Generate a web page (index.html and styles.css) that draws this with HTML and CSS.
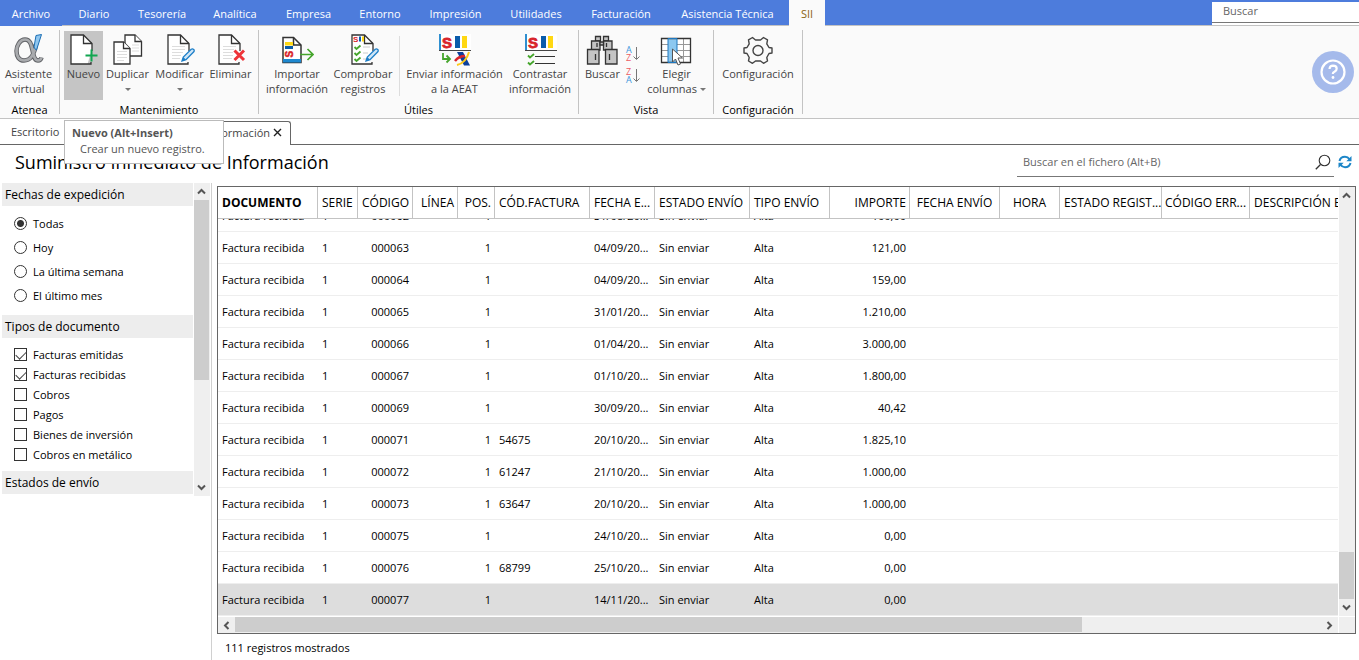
FILE: index.html
```html
<!DOCTYPE html>
<html lang="es">
<head>
<meta charset="utf-8">
<title>Suministro Inmediato de Información</title>
<link rel="stylesheet" href="styles.css">
</head>
<body>
<svg class="defs" aria-hidden="true">
  <symbol id="pencil" viewBox="0 0 14 14"><path d="M1 13l1.300-4L10.200 1.200Q11.500.3 12.700 1.400 13.700 2.600 12.800 3.800L5 11.700z" fill="#cfe6f7" stroke="#1e7fc8" stroke-width="1.300"/><path d="M1 13l1.300-4L5 11.700z" fill="#1e7fc8"/></symbol>
  <symbol id="page" viewBox="0 0 23 31"><path d="M22 15V9.500L13.500 1H1v29h16.500" fill="#fff" stroke="none"/><path d="M22 17V9.500L13.500 1H1v29h20v-2" fill="none" stroke="#333" stroke-width="1.300"/><path d="M13.500 1v8.500H22" fill="none" stroke="#333" stroke-width="1.300"/></symbol>
  <symbol id="sii" viewBox="0 0 33 18"><path d="M2 0h31v16H2z" fill="#fff"/><path d="M1 0h2v17H1z" fill="#2f8fd0"/><path d="M1 16h32v1H1z" fill="#444"/><text x="4" y="14" font-size="15" font-weight="bold" fill="#d8232a" stroke="#d8232a" stroke-width=".8" font-family="Liberation Sans">S</text><path d="M17 2h5v12h-5z" fill="#0a5cab"/><path d="M24 2h5v12h-5z" fill="#ffd813"/></symbol>
  <symbol id="up" viewBox="0 0 9 9"><path d="M1 6.500l3.500-3.500L8 6.500" fill="none" stroke="#555" stroke-width="2"/></symbol>
</svg>

<header class="menubar">
  <nav class="menu">
    <a href="#" class="file">Archivo</a><a href="#">Diario</a><a href="#">Tesorería</a><a href="#">Analítica</a><a href="#">Empresa</a><a href="#">Entorno</a><a href="#">Impresión</a><a href="#">Utilidades</a><a href="#">Facturación</a><a href="#">Asistencia Técnica</a><a href="#" class="active" aria-current="page">SII</a>
  </nav>
  <input class="menu-search" type="text" placeholder="Buscar" aria-label="Buscar">
</header>

<section class="ribbon" aria-label="Cinta de opciones">
  <div class="group">
    <div class="tools atenea">
      <button class="tool">
        <svg width="33" height="32" viewBox="0 0 33 32"><path d="M24 10C22 23 17 26.500 12 26.500 7 26.500 4.500 22.500 4.500 17S8 5.500 13 5.500c6 0 6.500 7 8 13 1 5 2 8 5 8 2 0 3-1 3.500-3" fill="none" stroke="#606266" stroke-width="4.500"/><path d="M24 10C22 23 17 26.500 12 26.500 7 26.500 4.500 22.500 4.500 17S8 5.500 13 5.500c6 0 6.500 7 8 13 1 5 2 8 5 8 2 0 3-1 3.500-3" fill="none" stroke="#a9abae" stroke-width="2.700"/><path d="M24 1.500L29.500.5 24.500 16q-2-1-2.500-3z" fill="#8fc6ef" stroke="#1c6fb5"/></svg>
        <span>Asistente<br>virtual</span>
      </button>
    </div>
    <h2>Atenea</h2>
  </div>
  <div class="group">
    <div class="tools mantenimiento">
      <button class="tool hover" aria-describedby="tip">
        <svg width="33" height="32" viewBox="0 0 33 32"><use href="#page" x="3" y="0" width="23" height="31"/><path d="M24.500 15.500v12M18.500 21.500h12" stroke="#11a650" stroke-width="2"/></svg>
        <span>Nuevo</span>
      </button>
      <button class="tool">
        <svg width="33" height="32" viewBox="0 0 33 32"><g fill="#fff" stroke="#333" stroke-width="1.300"><path d="M14 1h10l6.500 6.500V22H14z"/><path d="M24 1v6.500h6.500"/></g><path d="M21 11h7M21 14h7M21 17h7" stroke="#ddd"/><g fill="#fff" stroke="#333" stroke-width="1.300"><path d="M3 8h9.500l6.500 6.500V30H3z"/><path d="M12.500 8v6.500H19"/></g><path d="M6 17.500h10M6 20.500h10M6 23.500h10M6 26.500h7" stroke="#ddd"/></svg>
        <span>Duplicar</span><i class="caret"></i>
      </button>
      <button class="tool">
        <svg width="33" height="32" viewBox="0 0 33 32"><use href="#page" x="4" y="0" width="23" height="31"/><path d="M9 12.500h13M9 15.500h13M9 18.500h11M9 21.500h9M9 24.500h8" stroke="#ddd"/><use href="#pencil" x="18" y="14" width="14" height="14"/></svg>
        <span>Modificar</span><i class="caret"></i>
      </button>
      <button class="tool">
        <svg width="33" height="32" viewBox="0 0 33 32"><use href="#page" x="4" y="0" width="23" height="31"/><path d="M9 12.500h13M9 15.500h11M9 18.500h10M9 21.500h10M9 24.500h9" stroke="#ddd"/><path d="M20.500 16.500l9.500 9.500M30 16.500L20.500 26" stroke="#ee3338" stroke-width="3"/></svg>
        <span>Eliminar</span>
      </button>
    </div>
    <h2>Mantenimiento</h2>
  </div>
  <div class="group">
    <div class="tools utiles">
      <button class="tool">
        <svg width="33" height="32" viewBox="0 0 33 32"><path d="M2 3.500h10.500L20 11v17.500H2z" fill="#fff" stroke="#333" stroke-width="1.500"/><path d="M12.500 3.500V11H20" fill="none" stroke="#333" stroke-width="1.500"/><path d="M2 25h18v3.500H2z" fill="#1e88cf"/><path d="M4 8h8v3.500H4z" fill="#ffd813"/><path d="M4 12h8v3H4z" fill="#0a5cab"/><text transform="translate(11.500 23.500) rotate(-90)" font-size="10" font-weight="bold" font-family="Liberation Sans" fill="#d8232a" stroke="#d8232a" stroke-width=".5">S</text><path d="M19 20.500h12M26.500 15l5.500 5.500-5.500 5.500" fill="none" stroke="#45a52c" stroke-width="1.700"/></svg>
        <span>Importar<br>información</span>
      </button>
      <button class="tool">
        <svg width="33" height="32" viewBox="0 0 33 32"><use href="#page" x="4" y="0" width="23" height="31"/><text x="6" y="8" font-size="8" font-weight="bold" font-family="Liberation Sans" fill="#d8232a">S</text><path d="M12 2.500h2v5h-2z" fill="#0a5cab"/><path d="M15 2.500h2v5h-2z" fill="#ffd813"/><path d="M7.500 13l2 2 4-3.500M7.500 19l2 2 4-3.500M7.500 25l2 2 4-3.500" fill="none" stroke="#45a52c" stroke-width="1.800"/><path d="M16 13h7M16 19h5M16 25h3" stroke="#ccc"/><use href="#pencil" x="18" y="14" width="14" height="14"/></svg>
        <span>Comprobar<br>registros</span>
      </button>
      <i class="divider"></i>
      <button class="tool">
        <svg width="33" height="32" viewBox="0 0 33 32"><use href="#sii" width="33" height="18"/><path d="M5 19v6h7M8.500 21.500l3.500 3.500-3.500 3.500" fill="none" stroke="#45a52c" stroke-width="1.800"/><path d="M19 18h6l7 13.500h-6z" fill="#0b3f9b"/><path d="M17 27q4-5 10-5" fill="none" stroke="#d8232a" stroke-width="2.500"/><path d="M19 31Q28 29 31 18" fill="none" stroke="#ffc91a" stroke-width="2"/></svg>
        <span>Enviar información<br>a la AEAT</span>
      </button>
      <button class="tool">
        <svg width="33" height="32" viewBox="0 0 33 32"><use href="#sii" width="33" height="18"/><path d="M4 21.500l2 2 4-3.500M4 28.500l2 2 4-3.500" fill="none" stroke="#45a52c" stroke-width="1.800"/><path d="M11 22.500h20M11 29.500h20" stroke="#333"/></svg>
        <span>Contrastar<br>información</span>
      </button>
    </div>
    <h2>Útiles</h2>
  </div>
  <div class="group">
    <div class="tools vista">
      <button class="tool">
        <svg width="33" height="32" viewBox="0 0 33 32"><g fill="#c4c4c4" stroke="#333" stroke-width="1.300"><path d="M9.500 2.500h5V7h-5zM17.500 2.500h5V7h-5z"/><path d="M5.500 7H14v9H5.500zM17.500 7H26v9h-8.500z"/><path d="M14 8h3.500v3H14z"/><path d="M1.500 15.500H13V30H1.500zM19.500 15.500H31V30H19.500z"/></g><path d="M11 9v4M20.500 9v4M9.500 20v6M23.500 20v6" stroke="#333" stroke-width="1.300"/></svg>
        <span>Buscar</span>
      </button>
      <div class="sorts">
        <button aria-label="Orden ascendente"><svg width="16" height="22" viewBox="0 0 16 22"><text class="sa" x="1" y="10">A</text><text class="sz" x="1" y="18">Z</text><path d="M11.500 4v12M8.500 13.500l3 3 3-3" fill="none" stroke="#777"/></svg></button>
        <button aria-label="Orden descendente"><svg width="16" height="22" viewBox="0 0 16 22"><text class="sz" x="1" y="10">Z</text><text class="sa" x="1" y="18">A</text><path d="M11.500 4v12M8.500 13.500l3 3 3-3" fill="none" stroke="#777"/></svg></button>
      </div>
      <button class="tool">
        <svg width="33" height="32" viewBox="0 0 33 32"><path d="M1.500 4.500h29v24h-29z" fill="#fff"/><path d="M8 4.500h9v24H8z" fill="#8cc8f0"/><path d="M2 10.500h6M2 16.500h6M2 22.500h6M17 10.500h13M17 16.500h13M17 22.500h13M23.500 5v23" stroke="#999"/><path d="M1.500 4.500h29v24h-29z" fill="none" stroke="#333" stroke-width="1.300"/><path d="M8 4.500h9v24H8z" fill="none" stroke="#1e78c0"/><path d="M12.500 15v13l3-3 2.500 6 2.500-1-2.500-6h4.500z" fill="#fff" stroke="#555"/></svg>
        <span>Elegir<br>columnas <i class="caret"></i></span>
      </button>
    </div>
    <h2>Vista</h2>
  </div>
  <div class="group">
    <div class="tools config">
      <button class="tool">
        <svg width="32" height="32" viewBox="0 0 32 32"><g fill="none" stroke="#444" stroke-width="1.400" stroke-linejoin="round"><path d="M10.500 3.500l3 2.500h5l3-2.500 4 2.300-.7 4L27 13.500l3 .5v5l-3 .5-2.200 4 .7 3.500-4 2.300L18.500 27h-5l-3 2.300-4-2.300.7-3.500-2.200-4L2 19v-5l3-.5 2.200-3.700-.7-4z"/><circle cx="16" cy="16.500" r="5"/></g></svg>
        <span>Configuración</span>
      </button>
    </div>
    <h2>Configuración</h2>
  </div>
  <button class="help" aria-label="Ayuda"><svg width="42" height="42" viewBox="0 0 42 42"><circle cx="21" cy="21" r="21" fill="#a5baeb"/><g fill="none" stroke="#fff" stroke-width="2.200"><circle cx="21" cy="21" r="11.500"/><path d="M17.500 18q.3-3.300 3.500-3.300 3.700.1 3.700 3 0 1.800-2.200 3-1.700.8-1.700 2.300"/></g><circle cx="21" cy="26.500" r="1.400" fill="#fff"/></svg></button>
</section>

<nav class="doctabs">
  <a href="#" class="doctab">Escritorio</a>
  <div class="doctab current"><a href="#">Suministro Inmediato de Información</a><button aria-label="Cerrar"><svg width="9" height="9" viewBox="0 0 9 9"><path d="M1 1l7 7M8 1L1 8" stroke="#222" stroke-width="1.400"/></svg></button></div>
  <div class="tooltip" id="tip" role="tooltip"><strong>Nuevo (Alt+Insert)</strong><p>Crear un nuevo registro.</p></div>
</nav>

<div class="titlebar">
  <h1>Suministro Inmediato de Información</h1>
  <form class="filesearch">
    <div class="field"><input type="text" placeholder="Buscar en el fichero (Alt+B)" aria-label="Buscar en el fichero"><button type="button" aria-label="Buscar"><svg width="16" height="16" viewBox="0 0 16 16"><circle cx="9.500" cy="6.500" r="5.300" fill="none" stroke="#333" stroke-width="1.100"/><path d="M5.500 10.500L.8 15.200" stroke="#333" stroke-width="1.300"/></svg></button></div>
    <button type="button" aria-label="Actualizar"><svg width="14" height="14" viewBox="0 0 14 14"><path d="M1.500 6Q2.500 1.800 7 1.800q2.800 0 4.500 2.500M12.500 8q-1 4.200-5.500 4.200-2.800 0-4.500-2.500" fill="none" stroke="#1d86c8" stroke-width="2"/><path d="M13.500 1v5.200H8.300zM.5 13V7.800h5.200z" fill="#1d86c8"/></svg></button>
  </form>
</div>

<main class="workspace">
  <aside class="sidebar">
    <div class="filters">
      <fieldset>
        <legend>Fechas de expedición</legend>
        <div class="options radios">
          <label><input type="radio" name="fecha" checked>Todas</label>
          <label><input type="radio" name="fecha">Hoy</label>
          <label><input type="radio" name="fecha">La última semana</label>
          <label><input type="radio" name="fecha">El último mes</label>
        </div>
      </fieldset>
      <fieldset>
        <legend>Tipos de documento</legend>
        <div class="options checks">
          <label><input type="checkbox" checked>Facturas emitidas</label>
          <label><input type="checkbox" checked>Facturas recibidas</label>
          <label><input type="checkbox">Cobros</label>
          <label><input type="checkbox">Pagos</label>
          <label><input type="checkbox">Bienes de inversión</label>
          <label><input type="checkbox">Cobros en metálico</label>
        </div>
      </fieldset>
      <fieldset><legend>Estados de envío</legend></fieldset>
    </div>
    <div class="vbar side"><button aria-label="Subir"><svg width="9" height="9"><use href="#up"/></svg></button><span class="thumb"></span><button class="down" aria-label="Bajar"><svg width="9" height="9"><use href="#up"/></svg></button></div>
  </aside>

  <section class="content">
    <div class="grid">
      <div class="viewport">
        <table>
          <colgroup><col class="w100"><col class="w40"><col class="w55"><col class="w45"><col class="w37"><col class="w95"><col class="w65"><col class="w95"><col class="w80"><col class="w80"><col class="w90"><col class="w60"><col class="w102"><col class="w88"><col class="w300"></colgroup>
          <thead><tr><th class="sorted">DOCUMENTO</th><th>SERIE</th><th class="r">CÓDIGO</th><th class="r">LÍNEA</th><th class="r">POS.</th><th>CÓD.FACTURA</th><th>FECHA E...</th><th>ESTADO ENVÍO</th><th>TIPO ENVÍO</th><th class="r">IMPORTE</th><th class="c">FECHA ENVÍO</th><th class="c">HORA</th><th>ESTADO REGIST...</th><th class="r">CÓDIGO ERR...</th><th>DESCRIPCIÓN ERROR</th></tr></thead>
          <tbody>
            <tr><td>Factura recibida</td><td>1</td><td class="r">000062</td><td></td><td class="r">1</td><td></td><td>31/08/20...</td><td>Sin enviar</td><td>Alta</td><td class="r">100,00</td><td colspan="5"></td></tr>
            <tr><td>Factura recibida</td><td>1</td><td class="r">000063</td><td></td><td class="r">1</td><td></td><td>04/09/20...</td><td>Sin enviar</td><td>Alta</td><td class="r">121,00</td><td colspan="5"></td></tr>
            <tr><td>Factura recibida</td><td>1</td><td class="r">000064</td><td></td><td class="r">1</td><td></td><td>04/09/20...</td><td>Sin enviar</td><td>Alta</td><td class="r">159,00</td><td colspan="5"></td></tr>
            <tr><td>Factura recibida</td><td>1</td><td class="r">000065</td><td></td><td class="r">1</td><td></td><td>31/01/20...</td><td>Sin enviar</td><td>Alta</td><td class="r">1.210,00</td><td colspan="5"></td></tr>
            <tr><td>Factura recibida</td><td>1</td><td class="r">000066</td><td></td><td class="r">1</td><td></td><td>01/04/20...</td><td>Sin enviar</td><td>Alta</td><td class="r">3.000,00</td><td colspan="5"></td></tr>
            <tr><td>Factura recibida</td><td>1</td><td class="r">000067</td><td></td><td class="r">1</td><td></td><td>01/10/20...</td><td>Sin enviar</td><td>Alta</td><td class="r">1.800,00</td><td colspan="5"></td></tr>
            <tr><td>Factura recibida</td><td>1</td><td class="r">000069</td><td></td><td class="r">1</td><td></td><td>30/09/20...</td><td>Sin enviar</td><td>Alta</td><td class="r">40,42</td><td colspan="5"></td></tr>
            <tr><td>Factura recibida</td><td>1</td><td class="r">000071</td><td></td><td class="r">1</td><td>54675</td><td>20/10/20...</td><td>Sin enviar</td><td>Alta</td><td class="r">1.825,10</td><td colspan="5"></td></tr>
            <tr><td>Factura recibida</td><td>1</td><td class="r">000072</td><td></td><td class="r">1</td><td>61247</td><td>21/10/20...</td><td>Sin enviar</td><td>Alta</td><td class="r">1.000,00</td><td colspan="5"></td></tr>
            <tr><td>Factura recibida</td><td>1</td><td class="r">000073</td><td></td><td class="r">1</td><td>63647</td><td>20/10/20...</td><td>Sin enviar</td><td>Alta</td><td class="r">1.000,00</td><td colspan="5"></td></tr>
            <tr><td>Factura recibida</td><td>1</td><td class="r">000075</td><td></td><td class="r">1</td><td></td><td>24/10/20...</td><td>Sin enviar</td><td>Alta</td><td class="r">0,00</td><td colspan="5"></td></tr>
            <tr><td>Factura recibida</td><td>1</td><td class="r">000076</td><td></td><td class="r">1</td><td>68799</td><td>25/10/20...</td><td>Sin enviar</td><td>Alta</td><td class="r">0,00</td><td colspan="5"></td></tr>
            <tr class="selected"><td>Factura recibida</td><td>1</td><td class="r">000077</td><td></td><td class="r">1</td><td></td><td>14/11/20...</td><td>Sin enviar</td><td>Alta</td><td class="r">0,00</td><td colspan="5"></td></tr>
          </tbody>
        </table>
      </div>
      <div class="vbar"><button aria-label="Subir"><svg width="9" height="9"><use href="#up"/></svg></button><span class="thumb"></span><button class="down" aria-label="Bajar"><svg width="9" height="9"><use href="#up"/></svg></button></div>
      <div class="hbar"><button class="left" aria-label="Izquierda"><svg width="9" height="9"><use href="#up"/></svg></button><span class="track"><span class="thumb"></span></span><button class="right" aria-label="Derecha"><svg width="9" height="9"><use href="#up"/></svg></button></div>
      <div class="corner"></div>
    </div>
    <footer>111 registros mostrados</footer>
  </section>
</main>
</body>
</html>
```
FILE: styles.css
```css
* { box-sizing: border-box; }
body {
  margin: 0;
  height: 100vh;
  display: flex;
  flex-direction: column;
  overflow: hidden;
  background: #fff;
  color: #000;
  font: 11px/15px "Open Sans", "Noto Sans", sans-serif;
}
button, input { font: inherit; color: inherit; margin: 0; }
button { border: 0; padding: 0; background: none; }
a { color: inherit; text-decoration: none; }
h1, h2, p { margin: 0; font-weight: normal; }
svg { display: block; flex: none; }
.defs { display: none; }

/* Menu */
.menubar {
  flex: none;
  display: flex;
  justify-content: space-between;
  height: 26px;
  background: #4d7cdc;
  border-bottom: 1px solid #c3c3c3;
}
.menu {
  display: grid;
  grid-template-columns: 62px 64px 72px 74px 73px 70px 81px 80px 90px 123px 36px;
  height: 26px;
  color: #fff;
  text-align: center;
  line-height: 28px;
  white-space: nowrap;
}
.menu .file { background: #4d7cdc; }
.menu .active { background: #fafafa; color: #8a6410; }
.menu-search {
  width: 147px;
  height: 21px;
  margin-top: 2px;
  padding: 0 11px 3px;
  border: 0;
  border-bottom: 1px solid #777;
  background: #fff;
  box-shadow: 0 2px #fff;
}
input::placeholder { color: #666; opacity: 1; }

/* Ribbon */
.ribbon {
  flex: none;
  display: flex;
  height: 93px;
  padding-right: 5px;
  background: #fafafa;
  border-bottom: 1px solid #c3c3c3;
}
.group {
  display: flex;
  flex-direction: column;
  margin: 4px 0;
  border-right: 1px solid #c3c3c3;
}
.group h2 { flex: none; font-size: 11px; line-height: 15px; text-align: center; padding-top: 2px; }
.tools { flex: none; display: grid; height: 70px; padding: 1px 4px 0; }
.atenea { grid-template-columns: 57px; padding: 1px 2px 0 0; }
.mantenimiento { grid-template-columns: 39px 49px 55px 47px; }
.utiles { grid-template-columns: 66px 66px 7px 103px 68px; padding: 1px 4px 0 5px; }
.vista { grid-template-columns: 37px 24px 63px; padding: 1px 5px 0; }
.config { grid-template-columns: 80px; }
.tool {
  display: flex;
  flex-direction: column;
  align-items: center;
  padding-top: 3px;
  color: #444;
  white-space: nowrap;
}
.tool > svg { height: 32px; }
.tool > span { line-height: 15px; }
.tool.hover { background: #c5c5c5; }
.caret {
  display: inline-block;
  border: 3px solid transparent;
  border-top-color: #777;
  border-bottom: 0;
}
.tool > .caret { margin-top: 7px; }
.tool > span .caret { margin-bottom: 2px; }
.divider { width: 1px; height: 60px; margin: 5px auto 0 3px; background: #ddd; }
.sorts { display: flex; flex-direction: column; align-items: center; padding-top: 12px; }
.sa, .sz { font: 9px "Open Sans", sans-serif; fill: #3c96dc; }
.sz { fill: #ec5a62; }
.help { margin-left: auto; }

/* Document tabs */
.doctabs {
  flex: none;
  position: relative;
  display: flex;
  align-items: flex-end;
  height: 26px;
  color: #444;
  border-bottom: 1px solid #666;
}
.doctab { padding: 0 11px; line-height: 25px; white-space: nowrap; height: 25px; }
.doctab.current {
  display: flex;
  align-items: center;
  gap: 3px;
  height: 24px;
  margin-bottom: -1px;
  padding: 0 8px 2px 7px;
  line-height: 15px;
  border: 1px solid #666;
  border-bottom: 0;
  border-radius: 3px 3px 0 0;
  background: #fff;
}
.tooltip {
  position: absolute;
  z-index: 5;
  left: 64px;
  top: 1px;
  width: 160px;
  height: 44px;
  padding: 4px 7px;
  border: 1px solid #bbb;
  background: #fff;
  color: #555;
  white-space: nowrap;
}
.tooltip strong { display: block; }
.tooltip p { padding: 1px 8px; }

/* Title and search */
.titlebar {
  flex: none;
  display: flex;
  justify-content: space-between;
  align-items: center;
  height: 38px;
  padding: 0 7px 4px 15px;
}
.titlebar h1 { font-size: 18px; line-height: 34px; }
.filesearch { display: flex; align-items: center; gap: 4px; }
.field {
  display: flex;
  align-items: center;
  width: 317px;
  height: 30px;
  padding: 0 3px 0 6px;
  border-bottom: 1px solid #777;
}
.field input { flex: 1; border: 0; padding: 0; background: none; }

/* Workspace */
.workspace { flex: 1; min-height: 0; display: flex; }
.sidebar {
  flex: none;
  display: flex;
  align-items: flex-start;
  width: 212px;
  padding-left: 2px;
  border-right: 1px solid #d0d0d0;
}
.filters { width: 191px; margin-right: 1px; }
fieldset { margin: 0; padding: 0; border: 0; min-width: 0; }
legend { width: 100%; padding: 0 3px; line-height: 23px; background: #ededed; font-size: 12px; }
.options { display: flex; flex-direction: column; padding: 6px 12px 7px; }
.radios { padding: 5px 12px 8px; }
.options label { display: flex; align-items: center; gap: 6px; height: 20px; }
.radios label { height: 24px; }
.options input {
  appearance: none;
  width: 13px;
  height: 13px;
  border: 1px solid #333;
  background: #fff;
}
.options input[type="radio"] { border-radius: 50%; }
.options input[type="radio"]:checked { background: radial-gradient(circle, #333 3px, #fff 4px); }
.options input[type="checkbox"]:checked::before {
  content: "";
  display: block;
  width: 9px;
  height: 5px;
  margin: 2px 1px;
  border: solid #444;
  border-width: 0 0 1px 1px;
  transform: rotate(-45deg);
}
.vbar { display: flex; flex-direction: column; width: 16px; background: #efefef; }
.vbar button { flex: none; width: 15px; height: 17px; display: grid; place-items: center; }
.vbar .thumb { width: 15px; background: #cdcdcd; }
.vbar .down { margin-top: auto; }
.down svg { transform: rotate(180deg); }
.side { height: 313px; }
.side .thumb { height: 180px; }

.content { flex: 1; min-width: 0; display: flex; flex-direction: column; padding: 3px 3px 0 5px; }
.grid {
  flex: 1;
  min-height: 0;
  display: grid;
  grid-template: minmax(0, 1fr) 16px / minmax(0, 1fr) 16px;
  gap: 1px;
  border: 1px solid #666;
}
.grid .vbar .thumb { height: 47px; margin-top: auto; }
.grid .vbar .down { margin-top: 0; }
.viewport { overflow: hidden; display: flex; flex-direction: column-reverse; }
table { table-layout: fixed; width: 1332px; flex: none; border-collapse: separate; border-spacing: 0; font-size: 11px; }
th, td { height: 32px; padding: 0 4px; text-align: left; white-space: nowrap; overflow: hidden; border-bottom: 1px solid #eee; }
th {
  position: sticky;
  top: 0;
  z-index: 1;
  padding-right: 0;
  background: #fff;
  font-size: 12px;
  font-weight: normal;
  border-right: 1px solid #c3c3c3;
  border-bottom-color: #c3c3c3;
}
th.sorted { font-weight: bold; }
.r { text-align: right; }
.c { text-align: center; }
th.r { padding: 0 3px; }
th.c { padding: 0 4px; }
.selected td { background: #ddd; }
.w37 { width: 37px; } .w40 { width: 40px; } .w45 { width: 45px; } .w55 { width: 55px; }
.w60 { width: 60px; } .w65 { width: 65px; } .w80 { width: 80px; } .w88 { width: 88px; }
.w90 { width: 90px; } .w95 { width: 95px; } .w100 { width: 100px; } .w102 { width: 102px; }
.w300 { width: 300px; }
.hbar { display: flex; background: #efefef; }
.hbar button { flex: none; width: 17px; display: grid; place-items: center; }
.hbar .track { flex: 1; }
.hbar .thumb { display: block; width: 78%; height: 15px; background: #cdcdcd; }
.left svg { transform: rotate(-90deg); }
.right svg { transform: rotate(90deg); }
.corner { background: #efefef; }
footer { flex: none; height: 26px; padding-left: 8px; line-height: 28px; }
```
